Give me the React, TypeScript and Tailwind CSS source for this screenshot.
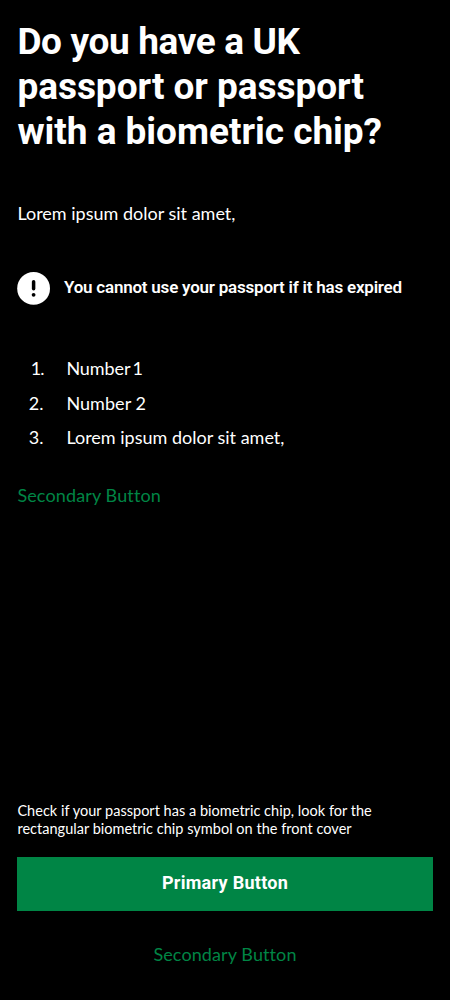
const steps = [
  { label: 'Number 1', spacing: 'tracking-[-0.1px] [word-spacing:-2px]', marker: 'tracking-[-1px]' },
  { label: 'Number 2', spacing: 'tracking-[0.05px]', marker: '' },
  { label: 'Lorem ipsum dolor sit amet,', spacing: '', marker: '' },
];

export default function App() {
  return (
    <main className="flex h-[1000px] w-full flex-col bg-black px-[17.4px] pt-[19px] font-['Lato',sans-serif] text-[18px] text-white">
      <h1 className="font-['Roboto',sans-serif] text-[37px] leading-[45px] font-bold">
        <span className="block tracking-[-0.36px]">Do you have a UK</span>
        <span className="block tracking-[-0.04px]">passport or passport</span>
        <span className="block tracking-[-0.03px]">with a biometric chip?</span>
      </h1>

      <p className="mt-[47px] leading-[24px]">Lorem ipsum dolor sit amet,</p>

      <div className="mt-[46.9px] flex items-center gap-[13.6px]">
        <svg className="size-[33px] shrink-0" viewBox="0 0 33 33" aria-hidden="true">
          <circle cx="16.6" cy="16.4" r="16.4" fill="#fff" />
          <path d="M16.6 9.8v6.9" stroke="#000" strokeWidth="3.5" strokeLinecap="round" />
          <circle cx="16.6" cy="22.8" r="1.9" fill="#000" />
        </svg>
        <p className="pb-[3px] font-['Roboto',sans-serif] text-[17px] leading-[24px] font-semibold tracking-[-0.22px] whitespace-nowrap">
          You cannot use your passport if it has expired
        </p>
      </div>

      <ol className="mt-[46.5px]">
        {steps.map((step, i) => (
          <li key={step.label} className="flex h-[34.6px] items-center">
            <span className={`w-[26px] text-right ${step.marker}`}>{i + 1}.</span>
            <span className={`ml-[23px] ${step.spacing}`}>{step.label}</span>
          </li>
        ))}
      </ol>

      <button className="mt-[28px] self-start text-[18px] leading-[24px] tracking-[0.13px] text-[#008545]">Secondary Button</button>

      <footer className="mt-auto flex flex-col pb-[34px]">
        <p className="text-[14.5px] leading-[18px] tracking-[0.02px] whitespace-nowrap">
          <span className="block">Check if your passport has a biometric chip, look for the</span>
          <span className="block">rectangular biometric chip symbol on the front cover</span>
        </p>
        <button className="mt-[19px] h-[54px] bg-[#008545] pb-[3px] font-['Roboto',sans-serif] text-[18px] font-bold tracking-[0.28px] text-white">
          Primary Button
        </button>
        <button className="mt-[31px] self-center text-[18px] leading-[24px] tracking-[0.1px] text-[#008545]">Secondary Button</button>
      </footer>
    </main>
  );
}
